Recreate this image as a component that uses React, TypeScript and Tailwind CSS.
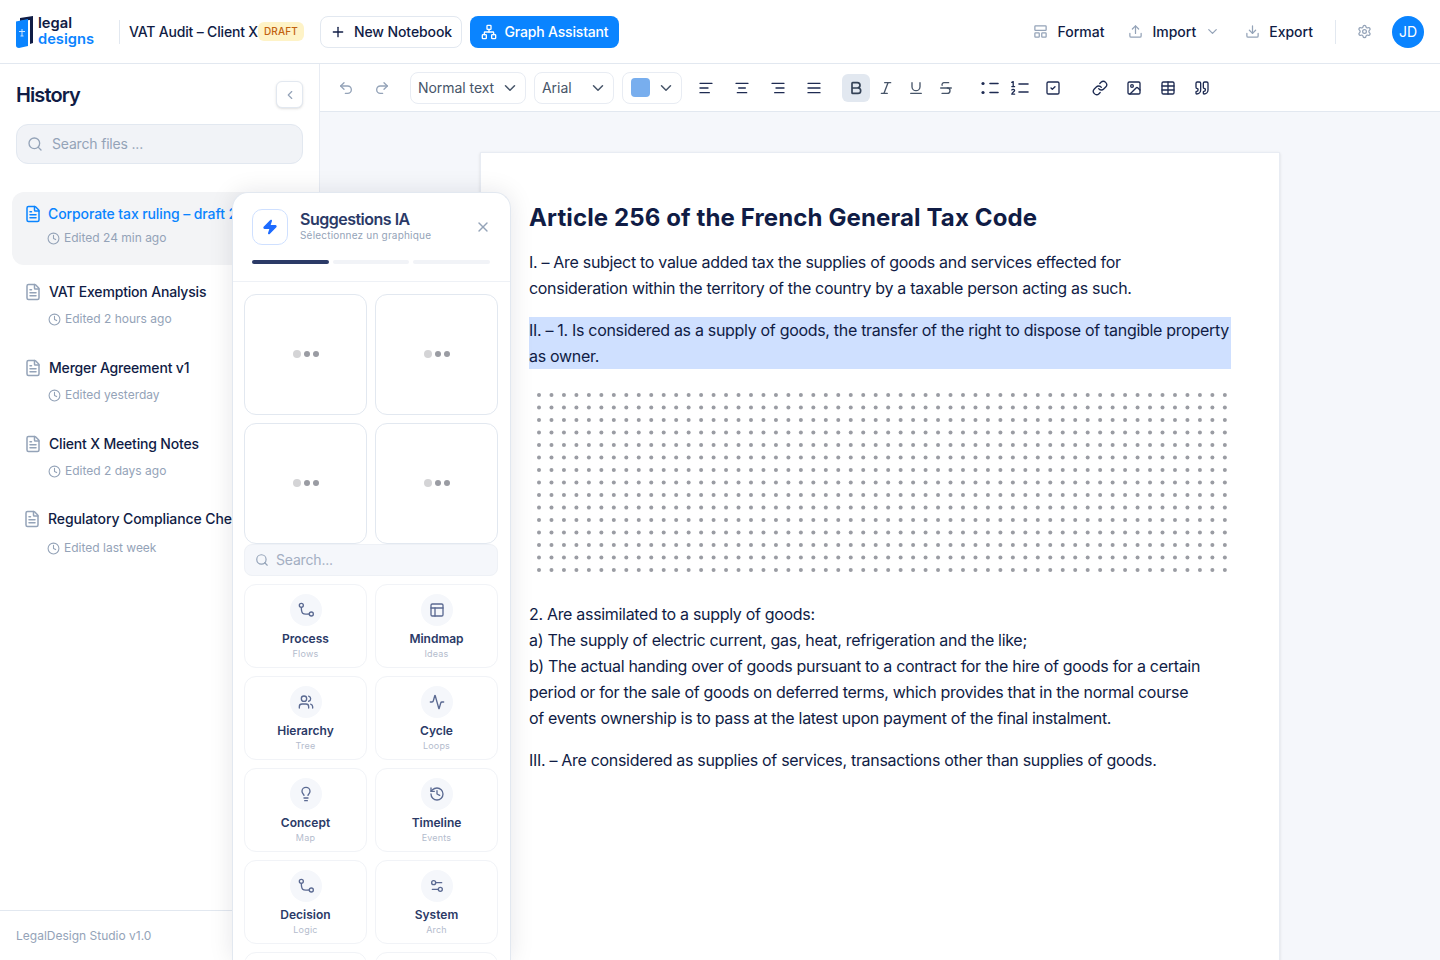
import React from 'react';
import {
  Activity, AlignCenter, AlignJustify, AlignLeft, AlignRight, Bold, ChevronDown, ChevronLeft, Clock, Download,
  FileText, History, Image, Italic, LayoutPanelTop, Lightbulb, Link, Network, PanelsTopLeft, Plus, Quote, Redo2,
  Search, Settings, Settings2, SquareCheck, Strikethrough, Table, Underline, Undo2, Upload, Users, X, Zap,
} from 'lucide-react';

function BranchIcon({ className }: { className?: string }) {
  return (
    <svg viewBox="0 0 24 24" fill="none" stroke="currentColor" strokeWidth="2" strokeLinecap="round" className={className}>
      <circle cx="5" cy="5" r="3" />
      <circle cx="20" cy="18" r="3" />
      <path d="M5 8c0 4 0 7 2 9 2 2 5 1 10 1" />
    </svg>
  );
}

function BulletsIcon() {
  return (
    <svg viewBox="0 0 18 14" className="w-[18px] h-[14px]" fill="none" stroke="currentColor" strokeWidth="1.6" strokeLinecap="round">
      <circle cx="2" cy="2.500" r="1.6" fill="currentColor" stroke="none" />
      <circle cx="2" cy="11.500" r="1.6" fill="currentColor" stroke="none" />
      <path d="M9 2.500h8M9 11.500h8" />
    </svg>
  );
}

function NumbersIcon() {
  return (
    <svg viewBox="0 0 18 14" className="w-[18px] h-[14px]" fill="none" stroke="currentColor" strokeWidth="1.3" strokeLinecap="round" strokeLinejoin="round">
      <path d="M.8 1.400 2.200.6v5M.8 5.600h2.800" />
      <path d="M.8 9c.4-1 2.800-1 2.800.4 0 1.200-2.800 2-2.800 3.800h2.800" />
      <path d="M8 3h9M8 11h9" strokeWidth="1.6" />
    </svg>
  );
}

function Logo() {
  return (
    <div className="w-[78px] flex items-center gap-1">
      <svg viewBox="0 0 18 32" className="w-[18px] h-[32px] shrink-0">
        <path d="M4 2 17 0v27l-3 1V4L4 5z" fill="#101c45" />
        <path d="M0 5.500 12 3v27L3 32c-2 0-3-1-3-2.500z" fill="#0a84ff" />
        <path d="M3 15.500h6M6 13v7M4.500 20h3" stroke="#cfe6ff" strokeWidth="1" />
      </svg>
      <div className="-mt-[2px] flex flex-col font-semibold text-[14.7px] leading-[16px]">
        <span className="text-[#101c45]">legal</span>
        <span className="text-[#0a84ff]">designs</span>
      </div>
    </div>
  );
}

function Header() {
  return (
    <header className="h-16 shrink-0 flex items-center bg-white border-b border-[#e2e8f0] pl-4 pr-4">
      <Logo />
      <div className="w-px h-6 bg-[#e2e8f0] ml-[25px] mr-[9px]" />
      <span className="w-[129px] text-sm font-medium tracking-[-0.18px] text-[#101c45] whitespace-nowrap">VAT Audit – Client X</span>
      <span className="h-[19px] w-[46px] flex items-center justify-center rounded-md bg-[#fef3c7] text-[#c2620f] text-[10px] font-medium tracking-[0.2px]">DRAFT</span>
      <button className="ml-4 h-8 w-[142px] flex items-center justify-center gap-2 rounded-lg border border-[#e2e8f0] bg-white text-sm font-medium tracking-[-0.1px] text-[#101c45]">
        <Plus className="w-4 h-4" />
        New Notebook
      </button>
      <button className="ml-2 h-8 w-[149px] flex items-center justify-center gap-2 rounded-lg bg-[#0a84ff] text-sm font-medium tracking-[-0.18px] text-white">
        <Network className="w-4 h-4" />
        Graph Assistant
      </button>
      <div className="ml-auto flex items-center">
        <button className="flex items-center gap-[9px] text-sm font-medium text-[#101c45]">
          <LayoutPanelTop className="w-[15px] h-[15px] text-[#94a3b8]" />
          Format
        </button>
        <button className="ml-6 flex items-center gap-[9px] text-sm font-medium text-[#101c45]">
          <Upload className="w-[15px] h-[15px] text-[#94a3b8]" />
          Import
          <ChevronDown className="w-[15px] h-[15px] text-[#94a3b8]" />
        </button>
        <button className="ml-[25px] flex items-center gap-[9px] text-sm font-medium text-[#101c45]">
          <Download className="w-[15px] h-[15px] text-[#94a3b8]" />
          Export
        </button>
        <div className="w-px h-6 bg-[#e2e8f0] ml-[22px] mr-[21px]" />
        <Settings className="w-[15px] h-[15px] text-[#94a3b8]" />
        <div className="ml-[20px] w-8 h-8 rounded-full bg-[#0a84ff] flex items-center justify-center text-sm text-white">JD</div>
      </div>
    </header>
  );
}

const historyItems = [
  { title: 'VAT Exemption Analysis', meta: 'Edited 2 hours ago', top: 'mt-[18px]', gap: 'mt-[11px]', left: 'pl-[14px]', track: 'tracking-[-0.18px]' },
  { title: 'Merger Agreement v1', meta: 'Edited yesterday', top: 'mt-[33px]', gap: 'mt-[11px]', left: 'pl-[14px]', track: 'tracking-[-0.18px]' },
  { title: 'Client X Meeting Notes', meta: 'Edited 2 days ago', top: 'mt-[33px]', gap: 'mt-[11px]', left: 'pl-[14px]', track: 'tracking-[-0.18px]' },
  { title: 'Regulatory Compliance Checklist', meta: 'Edited last week', top: 'mt-[32px]', gap: 'mt-[13px]', left: 'pl-[13px]', track: 'tracking-[-0.1px]' },
];

function Sidebar() {
  return (
    <aside className="w-80 shrink-0 flex flex-col bg-white border-r border-[#e8ecf3]">
      <div className="px-4 pt-[17px]">
        <div className="flex items-center justify-between h-[27px]">
          <h2 className="text-xl font-semibold tracking-[-0.9px] text-[#101c45]">History</h2>
          <button className="w-[27px] h-[27px] flex items-center justify-center rounded-md border border-[#e2e8f0] bg-white shadow-sm">
            <ChevronLeft className="w-3.5 h-3.5 text-[#94a3b8]" />
          </button>
        </div>
        <div className="mt-4 h-10 flex items-center gap-[9px] rounded-xl border border-[#e2e8f0] bg-[#f1f3f7] px-[10px] text-sm tracking-[-0.18px] text-[#94a3b8]">
          <Search className="w-4 h-4" />
          Search files ...
        </div>
      </div>

      <div className="flex-1 mt-7 pl-3 overflow-hidden">
        <div className="h-[73px] rounded-xl bg-[#f3f4f6] pl-3 pt-3">
          <div className="flex items-center gap-[6px] text-sm font-medium tracking-[-0.1px] text-[#0a84ff] whitespace-nowrap">
            <FileText className="w-[18px] h-[18px] shrink-0" />
            Corporate tax ruling – draft 2
          </div>
          <div className="mt-[6px] flex items-center gap-1 pl-[23px] text-xs text-[#94a3b8]">
            <Clock className="w-[13px] h-[13px]" />
            Edited 24 min ago
          </div>
        </div>
        {historyItems.map((item) => (
          <div key={item.title} className={`${item.top} ${item.left}`}>
            <div className={`-ml-[2px] flex items-center gap-[7px] h-[18px] text-sm font-medium ${item.track} text-[#101c45] whitespace-nowrap`}>
              <FileText className="w-[18px] h-[18px] shrink-0 text-[#94a3b8]" />
              {item.title}
            </div>
            <div className={`${item.gap} flex items-center gap-1 pl-[22px] h-[14px] text-xs text-[#94a3b8]`}>
              <Clock className="w-[13px] h-[13px]" />
              {item.meta}
            </div>
          </div>
        ))}
      </div>

      <div className="h-[50px] flex items-center border-t border-[#e2e8f0] px-4 text-xs text-[#94a3b8]">LegalDesign Studio v1.0</div>
    </aside>
  );
}

function Select({ label, width }: { label: string; width: string }) {
  return (
    <div className={`${width} h-8 flex items-center justify-between rounded-lg border border-[#e8ecf3] bg-white pl-[7px] pr-[6px] text-sm tracking-[-0.05px] text-[#475569]`}>
      {label}
      <ChevronDown className="w-[18px] h-[18px]" />
    </div>
  );
}

function ToolIcon({ children, width, active }: { children: React.ReactNode; width: string; active?: boolean }) {
  return (
    <div className={`${width} h-7 shrink-0 flex items-center justify-center rounded-md ${active ? 'bg-[#e2e8f0]' : ''}`}>{children}</div>
  );
}

function Toolbar() {
  const icon = 'w-4 h-4';
  return (
    <div className="h-12 shrink-0 flex items-center bg-white border-b border-[#e2e8f0] pl-[18px] text-[#334155]">
      <Undo2 className="w-4 h-4 text-[#94a3b8]" />
      <Redo2 className="ml-5 w-4 h-4 text-[#94a3b8]" />
      <div className="ml-5 flex items-center gap-2">
        <Select label="Normal text" width="w-[116px]" />
        <Select label="Arial" width="w-20" />
        <div className="w-[60px] h-8 flex items-center justify-between rounded-lg border border-[#e8ecf3] bg-white pl-2 pr-[6px] text-[#475569]">
          <span className="w-[19px] h-[19px] rounded bg-[#78aeee]" />
          <ChevronDown className="w-[18px] h-[18px]" />
        </div>
      </div>
      <div className="ml-[6px] flex items-center text-[#1e2b52]">
        <ToolIcon width="w-9"><AlignLeft className={icon} /></ToolIcon>
        <ToolIcon width="w-9"><AlignCenter className={icon} /></ToolIcon>
        <ToolIcon width="w-9"><AlignRight className={icon} /></ToolIcon>
        <ToolIcon width="w-9"><AlignJustify className={icon} /></ToolIcon>
      </div>
      <div className="ml-[10px] flex items-center gap-[2px] text-[#475569]">
        <ToolIcon width="w-7" active><Bold className="w-4 h-4 text-[#334155]" strokeWidth={2.5} /></ToolIcon>
        <ToolIcon width="w-7"><Italic className="w-4 h-4" /></ToolIcon>
        <ToolIcon width="w-7"><Underline className="w-4 h-4" /></ToolIcon>
        <ToolIcon width="w-7"><Strikethrough className="w-4 h-4" /></ToolIcon>
      </div>
      <div className="ml-4 flex items-center gap-[2px] text-[#1e2b52]">
        <ToolIcon width="w-7"><BulletsIcon /></ToolIcon>
        <ToolIcon width="w-7"><NumbersIcon /></ToolIcon>
        <ToolIcon width="w-[34px]"><SquareCheck className={icon} /></ToolIcon>
      </div>
      <div className="ml-[13px] flex items-center text-[#1e2b52]">
        <ToolIcon width="w-[34px]"><Link className={icon} /></ToolIcon>
        <ToolIcon width="w-[34px]"><Image className={icon} /></ToolIcon>
        <ToolIcon width="w-[34px]"><Table className={icon} /></ToolIcon>
        <ToolIcon width="w-[34px]"><Quote className={icon} /></ToolIcon>
      </div>
    </div>
  );
}

function DotGrid() {
  const rows = Array.from({ length: 15 }, (_, r) => r);
  const cols = Array.from({ length: 56 }, (_, c) => c);
  return (
    <svg width="702" height="190" className="block mt-4 text-[#9a9ca3]">
      {rows.map((r) =>
        cols.map((c) => <circle key={`${r}-${c}`} cx={10 + c * 12.47} cy={10 + r * 12.5} r="2" fill="currentColor" />),
      )}
    </svg>
  );
}

function Document() {
  return (
    <main className="flex-1 min-h-0 pt-10 pl-40 bg-[#f5f7fb]">
      <article className="w-[800px] h-[900px] border border-[#e8ecf3] bg-white pl-12 pr-12 pt-[49px] text-base tracking-[-0.31px] leading-[26px] text-[#101c45] shadow-sm">
        <h1 className="text-2xl leading-[32px] tracking-[0.12px] font-bold">Article 256 of the French General Tax Code</h1>
        <p className="mt-[15px]">
          I. – Are subject to value added tax the supplies of goods and services effected for<br />
          consideration within the territory of the country by a taxable person acting as such.
        </p>
        <p className="mt-4 bg-[#cfe0ff] whitespace-nowrap">
          II. – 1. Is considered as a supply of goods, the transfer of the right to dispose of tangible property<br />
          as owner.
        </p>
        <DotGrid />
        <p className="mt-[26px]">
          2. Are assimilated to a supply of goods:<br />
          a) The supply of electric current, gas, heat, refrigeration and the like;<br />
          b) The actual handing over of goods pursuant to a contract for the hire of goods for a certain<br />
          period or for the sale of goods on deferred terms, which provides that in the normal course<br />
          of events ownership is to pass at the latest upon payment of the final instalment.
        </p>
        <p className="mt-4">III. – Are considered as supplies of services, transactions other than supplies of goods.</p>
      </article>
    </main>
  );
}

function PlaceholderCard() {
  return (
    <div className="h-[121px] rounded-xl border border-[#e2e8f0] bg-white flex items-center justify-center gap-[3px] pb-[2px]">
      <span className="w-2 h-2 rounded-full bg-[#d4d4d6]" />
      <span className="w-[6px] h-[6px] rounded-full bg-[#9a9ca3]" />
      <span className="w-[6px] h-[6px] rounded-full bg-[#9a9ca3]" />
    </div>
  );
}

const graphTypes = [
  { name: 'Process', hint: 'Flows', Icon: BranchIcon },
  { name: 'Mindmap', hint: 'Ideas', Icon: PanelsTopLeft },
  { name: 'Hierarchy', hint: 'Tree', Icon: Users },
  { name: 'Cycle', hint: 'Loops', Icon: Activity },
  { name: 'Concept', hint: 'Map', Icon: Lightbulb },
  { name: 'Timeline', hint: 'Events', Icon: History },
  { name: 'Decision', hint: 'Logic', Icon: BranchIcon },
  { name: 'System', hint: 'Arch', Icon: Settings2 },
];

function SuggestionsPanel() {
  return (
    <div className="absolute left-[232px] top-[192px] w-[279px] h-[768px] overflow-hidden rounded-t-2xl border border-b-0 border-[#e2e8f0] bg-white shadow-[0_0_24px_rgba(15,23,42,0.10)]">
      <div className="h-[89px] border-b border-[#eef1f6] pl-[19px] pr-5 pt-4">
        <div className="flex items-center">
          <div className="w-9 h-9 rounded-[10px] border border-[#cfe0ff] bg-white flex items-center justify-center">
            <Zap className="w-4 h-4 text-[#1d6bff] fill-[#1d6bff]" />
          </div>
          <div className="ml-3 flex-1 pb-[2px]">
            <div className="text-base leading-[18px] font-semibold tracking-[-0.5px] text-[#2b3a67]">Suggestions IA</div>
            <div className="mt-px text-[10px] leading-[13px] tracking-[0.2px] text-[#94a3b8]">Sélectionnez un graphique</div>
          </div>
          <X className="-mr-px w-4 h-4 text-[#94a3b8]" />
        </div>
        <div className="mt-[15px] flex gap-1">
          <div className="flex-1 h-[4px] rounded-full bg-[#2b3a67]" />
          <div className="flex-1 h-[4px] rounded-full bg-[#f1f3f7]" />
          <div className="flex-1 h-[4px] rounded-full bg-[#f1f3f7]" />
        </div>
      </div>

      <div className="pl-[11px] pr-3 pt-3">
        <div className="grid grid-cols-2 gap-x-2 gap-y-2">
          <PlaceholderCard />
          <PlaceholderCard />
          <PlaceholderCard />
          <PlaceholderCard />
        </div>
        <div className="h-8 flex items-center gap-[7px] rounded-lg border border-[#eef1f6] bg-[#f5f7fb] px-[10px] text-sm tracking-[-0.18px] text-[#a3aec2]">
          <Search className="w-[14px] h-[14px] text-[#94a3b8]" />
          Search...
        </div>
        <div className="mt-2 grid grid-cols-2 gap-2">
          {graphTypes.map(({ name, hint, Icon }) => (
            <div key={name} className="h-[84px] rounded-xl border border-[#f1f3f7] bg-white flex flex-col items-center pt-[9px]">
              <div className="w-8 h-8 rounded-full bg-[#f5f7fb] flex items-center justify-center">
                <Icon className="w-4 h-4 text-[#5b6a92]" />
              </div>
              <div className="mt-[5px] text-xs leading-[16px] font-semibold text-[#2b3a67]">{name}</div>
              <div className="text-[9px] leading-[14px] tracking-[0.2px] text-[#b4bccd]">{hint}</div>
            </div>
          ))}
          <div className="h-[84px] rounded-xl border border-[#f1f3f7] bg-white" />
          <div className="h-[84px] rounded-xl border border-[#f1f3f7] bg-white" />
        </div>
      </div>
    </div>
  );
}

export default function App() {
  return (
    <div className="relative h-[960px] overflow-hidden flex flex-col font-['Inter',sans-serif] bg-white">
      <Header />
      <div className="flex-1 min-h-0 flex">
        <Sidebar />
        <div className="flex-1 min-w-0 flex flex-col">
          <Toolbar />
          <Document />
        </div>
      </div>
      <SuggestionsPanel />
    </div>
  );
}
